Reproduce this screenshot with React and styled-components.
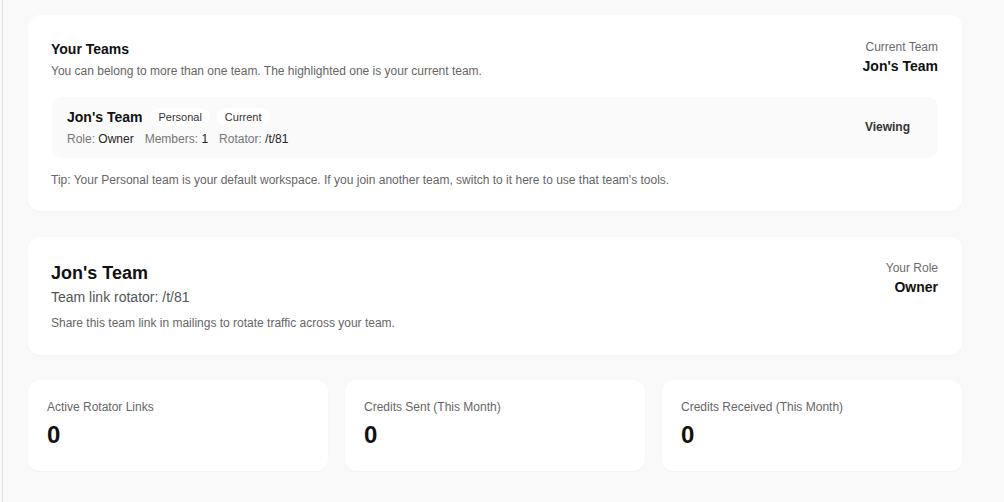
import styled, { createGlobalStyle } from "styled-components";

const GlobalStyle = createGlobalStyle`
  html, body {
    margin: 0;
    padding: 0;
    background: #f9f9f9;
    font-family: "Liberation Sans", Arial, sans-serif;
    color: #111;
  }
  * { box-sizing: border-box; }
`;

const Page = styled.div`
  min-height: 502px;
  margin-left: 2px;
  border-left: 1px solid #e3e3e3;
  padding: 15px 42px 30px 25px;
  display: flex;
  flex-direction: column;
  gap: 26px;
`;

const Card = styled.div`
  background: #fff;
  border-radius: 12px;
  box-shadow: 0 1px 2px rgba(0, 0, 0, 0.03);
  padding: ${(p) => p.$pad || "25px 24px 23px 23px"};
`;

const CardHead = styled.div`
  display: flex;
  justify-content: space-between;
  align-items: flex-start;
`;

const Title = styled.h2`
  margin: 0;
  font-size: ${(p) => (p.$big ? "18px" : "14px")};
  font-weight: 700;
  line-height: ${(p) => (p.$big ? "24px" : "18px")};
  color: #111;
`;

const Muted = styled.p`
  margin: ${(p) => p.$m || "0"};
  font-size: ${(p) => p.$size || "12px"};
  line-height: ${(p) => p.$lh || "16px"};
  color: ${(p) => p.$color || "#666"};
`;

const Side = styled.div`
  text-align: right;
  margin-top: ${(p) => p.$top || "0"};
`;

const SideLabel = styled.div`
  font-size: 12px;
  line-height: 16px;
  color: #6b6b6b;
`;

const SideValue = styled.div`
  margin-top: 1px;
  font-size: 14px;
  font-weight: 700;
  line-height: 20px;
  color: #111;
`;

const TeamRow = styled.div`
  margin-top: 18px;
  margin-left: 1px;
  background: #fafafa;
  border-radius: 10px;
  padding: 10px 15px 11px 15px;
  display: flex;
  align-items: center;
  justify-content: space-between;
`;

const TeamInfo = styled.div`
  display: flex;
  flex-direction: column;
  gap: 4px;
`;

const TeamNameLine = styled.div`
  display: flex;
  align-items: center;
  gap: 7px;
`;

const TeamName = styled.span`
  font-size: 14px;
  font-weight: 700;
  line-height: 20px;
  color: #111;
  margin-right: 1px;
`;

const Badge = styled.span`
  background: #fff;
  border-radius: 999px;
  padding: 2px 8px;
  font-size: 11px;
  line-height: 14px;
  color: #333;
`;

const Meta = styled.div`
  display: flex;
  gap: 11px;
  font-size: 12px;
  line-height: 16px;
  color: #777;
`;

const MetaValue = styled.span`
  color: #222;
`;

const ViewBtn = styled.span`
  font-size: 12px;
  font-weight: 700;
  color: #333;
  padding: 6px 13px;
  border-radius: 8px;
`;

const Stats = styled.div`
  display: grid;
  grid-template-columns: repeat(3, 1fr);
  gap: 17px;
  margin-top: -1px;
`;

const StatCard = styled(Card)`
  height: 91px;
`;

const StatLabel = styled.div`
  font-size: 12px;
  line-height: 16px;
  color: #666;
`;

const StatValue = styled.div`
  margin-top: 6px;
  font-size: 24px;
  font-weight: 700;
  line-height: 28px;
  color: #111;
`;

const stats = [
  { label: "Active Rotator Links", value: 0 },
  { label: "Credits Sent (This Month)", value: 0 },
  { label: "Credits Received (This Month)", value: 0 },
];

export default function App() {
  return (
    <>
      <GlobalStyle />
      <Page>
        <Card>
          <CardHead>
            <div>
              <Title>Your Teams</Title>
              <Muted $m="5px 0 0">
                You can belong to more than one team. The highlighted one is
                your current team.
              </Muted>
            </div>
            <Side $top="-1px">
              <SideLabel>Current Team</SideLabel>
              <SideValue>Jon's Team</SideValue>
            </Side>
          </CardHead>
          <TeamRow>
            <TeamInfo>
              <TeamNameLine>
                <TeamName>Jon's Team</TeamName>
                <Badge>Personal</Badge>
                <Badge>Current</Badge>
              </TeamNameLine>
              <Meta>
                <span>
                  Role: <MetaValue>Owner</MetaValue>
                </span>
                <span>
                  Members: <MetaValue>1</MetaValue>
                </span>
                <span>
                  Rotator: <MetaValue>/t/81</MetaValue>
                </span>
              </Meta>
            </TeamInfo>
            <ViewBtn>Viewing</ViewBtn>
          </TeamRow>
          <Muted $m="14px 0 0">
            Tip: Your Personal team is your default workspace. If you join
            another team, switch to it here to use that team's tools.
          </Muted>
        </Card>

        <Card $pad="24px 24px 24px 23px">
          <CardHead>
            <div>
              <Title $big>Jon's Team</Title>
              <Muted $m="3px 0 0" $size="14px" $lh="18px" $color="#555">
                Team link rotator: /t/81
              </Muted>
              <Muted $m="9px 0 0">
                Share this team link in mailings to rotate traffic across your
                team.
              </Muted>
            </div>
            <Side $top="-1px">
              <SideLabel>Your Role</SideLabel>
              <SideValue>Owner</SideValue>
            </Side>
          </CardHead>
        </Card>

        <Stats>
          {stats.map((s) => (
            <StatCard key={s.label} $pad="19px 19px">
              <StatLabel>{s.label}</StatLabel>
              <StatValue>{s.value}</StatValue>
            </StatCard>
          ))}
        </Stats>
      </Page>
    </>
  );
}
